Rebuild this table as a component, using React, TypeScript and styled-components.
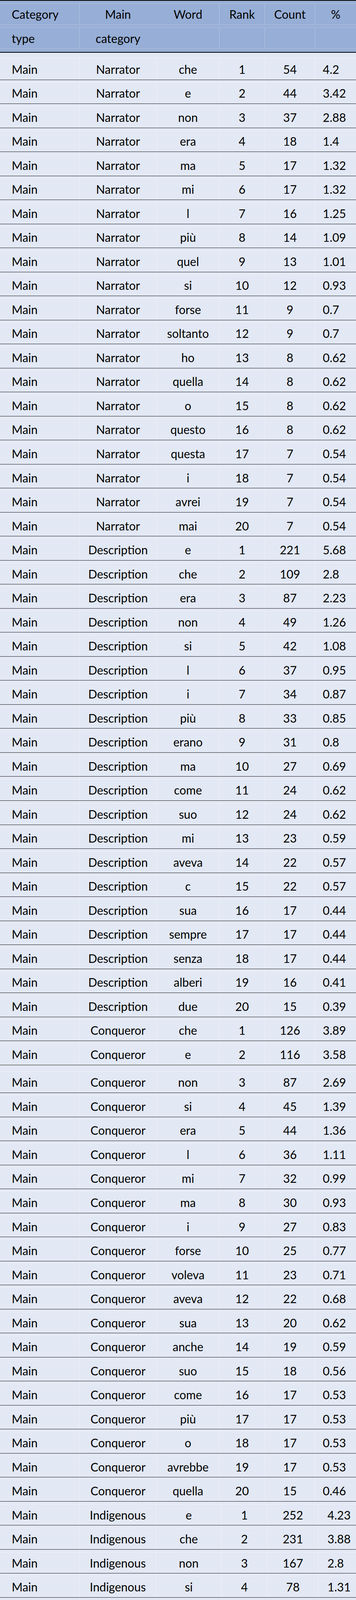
import React from 'react';
import styled, { createGlobalStyle } from 'styled-components';

const GlobalStyle = createGlobalStyle`
  html, body {
    margin: 0;
    padding: 0;
    background: #ffffff;
  }
  body {
    font-family: Lato, 'Open Sans', Arial, sans-serif;
    color: #000;
  }
`;

type Row = [word: string, rank: number, count: number, pct: string];

// column widths (px) taken from the cell rules in the screenshot
const TOP_COLS = '204px 197px 161px 116px 129px 1fr';
const LAST_COLS = '204px 196px 167px 118px 130px 1fr';
const ROW_HEIGHT = 61.53;

const sections: { category: string; cols: string; pctPad: number; rows: Row[] }[] = [
  {
    category: 'Narrator',
    cols: TOP_COLS,
    pctPad: 19,
    rows: [
      ['che', 1, 54, '4.2'], ['e', 2, 44, '3.42'], ['non', 3, 37, '2.88'], ['era', 4, 18, '1.4'],
      ['ma', 5, 17, '1.32'], ['mi', 6, 17, '1.32'], ['l', 7, 16, '1.25'], ['più', 8, 14, '1.09'],
      ['quel', 9, 13, '1.01'], ['si', 10, 12, '0.93'], ['forse', 11, 9, '0.7'], ['soltanto', 12, 9, '0.7'],
      ['ho', 13, 8, '0.62'], ['quella', 14, 8, '0.62'], ['o', 15, 8, '0.62'], ['questo', 16, 8, '0.62'],
      ['questa', 17, 7, '0.54'], ['i', 18, 7, '0.54'], ['avrei', 19, 7, '0.54'], ['mai', 20, 7, '0.54'],
    ],
  },
  {
    category: 'Description',
    cols: TOP_COLS,
    pctPad: 19,
    rows: [
      ['e', 1, 221, '5.68'], ['che', 2, 109, '2.8'], ['era', 3, 87, '2.23'], ['non', 4, 49, '1.26'],
      ['si', 5, 42, '1.08'], ['l', 6, 37, '0.95'], ['i', 7, 34, '0.87'], ['più', 8, 33, '0.85'],
      ['erano', 9, 31, '0.8'], ['ma', 10, 27, '0.69'], ['come', 11, 24, '0.62'], ['suo', 12, 24, '0.62'],
      ['mi', 13, 23, '0.59'], ['aveva', 14, 22, '0.57'], ['c', 15, 22, '0.57'], ['sua', 16, 17, '0.44'],
      ['sempre', 17, 17, '0.44'], ['senza', 18, 17, '0.44'], ['alberi', 19, 16, '0.41'], ['due', 20, 15, '0.39'],
    ],
  },
  {
    category: 'Conqueror',
    cols: TOP_COLS,
    pctPad: 19,
    rows: [
      ['che', 1, 126, '3.89'], ['e', 2, 116, '3.58'], ['non', 3, 87, '2.69'], ['si', 4, 45, '1.39'],
      ['era', 5, 44, '1.36'], ['l', 6, 36, '1.11'], ['mi', 7, 32, '0.99'], ['ma', 8, 30, '0.93'],
      ['i', 9, 27, '0.83'], ['forse', 10, 25, '0.77'], ['voleva', 11, 23, '0.71'], ['aveva', 12, 22, '0.68'],
      ['sua', 13, 20, '0.62'], ['anche', 14, 19, '0.59'], ['suo', 15, 18, '0.56'], ['come', 16, 17, '0.53'],
      ['più', 17, 17, '0.53'], ['o', 18, 17, '0.53'], ['avrebbe', 19, 17, '0.53'], ['quella', 20, 15, '0.46'],
    ],
  },
  {
    category: 'Indigenous',
    cols: LAST_COLS,
    pctPad: 23,
    rows: [
      ['e', 1, 252, '4.23'], ['che', 2, 231, '3.88'], ['non', 3, 167, '2.8'], ['si', 4, 78, '1.31'],
      ['era', 5, 77, '1.29'], ['mi', 6, 69, '1.16'], ['ma', 7, 67, '1.12'], ['l', 8, 61, '1.02'],
      ['aveva', 9, 56, '0.94'], ['forse', 10, 47, '0.79'], ['come', 11, 47, '0.79'], ['se', 12, 40, '0.67'],
      ['suo', 13, 39, '0.65'], ['perché', 14, 39, '0.65'], ['senza', 15, 38, '0.64'], ['i', 16, 38, '0.64'],
      ['più', 17, 38, '0.64'], ['johannes', 18, 38, '0.64'], ['mia', 19, 34, '0.57'], ['sua', 20, 34, '0.57'],
    ],
  },
];

const Table = styled.div`
  width: 911px;
  font-family: Lato, 'Open Sans', Arial, sans-serif;
  font-size: 30px;
  line-height: 1;
  color: #000;
`;

const Head = styled.div`
  background: #97aed6;
  border-top: 2px solid #000;
  border-bottom: 2px solid #000;
  padding: 6px 0 8px;
  display: flex;
  flex-direction: column;
  gap: 6px;
`;

const HeadRow = styled.div<{ $h: number }>`
  display: grid;
  grid-template-columns: ${TOP_COLS};
  height: ${({ $h }) => $h}px;
  box-sizing: border-box;
  border-top: 1px solid rgba(255, 255, 255, 0.28);
  border-bottom: 1px solid rgba(255, 255, 255, 0.28);
`;

const HeadCell = styled.div<{ $left?: boolean; $noRule?: boolean }>`
  display: flex;
  align-items: center;
  justify-content: ${({ $left }) => ($left ? 'flex-start' : 'center')};
  padding-left: ${({ $left }) => ($left ? '30px' : '0')};
  border-right: 1px solid
    ${({ $noRule }) => ($noRule ? 'transparent' : 'rgba(255, 255, 255, 0.28)')};
  &:last-child {
    border-right: none;
  }
`;

const Body = styled.div`
  background: #e2e8f4;
  border-bottom: 1px solid #000;
`;

const BodyRow = styled.div<{ $extra: number }>`
  height: ${({ $extra }) => ROW_HEIGHT + $extra}px;
  box-sizing: border-box;
  padding-top: ${({ $extra }) => 6 + $extra}px;
  border-bottom: 1px solid #1e1e1e;
  display: flex;
  overflow: hidden;
`;

const Cells = styled.div<{ $cols: string }>`
  flex: 1;
  display: grid;
  grid-template-columns: ${({ $cols }) => $cols};
  border-top: 1px solid rgba(255, 255, 255, 0.45);
`;

const Cell = styled.div<{ $align: 'left' | 'center' | 'pct'; $pad?: number }>`
  display: flex;
  align-items: center;
  justify-content: ${({ $align }) => ($align === 'center' ? 'center' : 'flex-start')};
  padding-left: ${({ $align, $pad }) =>
    $align === 'left' ? '30px' : $align === 'pct' ? `${$pad ?? 19}px` : '0'};
  border-right: 1px solid rgba(255, 255, 255, 0.45);
  white-space: nowrap;
  &:last-child {
    border-right: none;
  }
`;

export default function App() {
  return (
    <>
      <GlobalStyle />
      <Table>
        <Head>
          <HeadRow $h={56}>
            <HeadCell $left>Category</HeadCell>
            <HeadCell $noRule>Main</HeadCell>
            <HeadCell>Word</HeadCell>
            <HeadCell>Rank</HeadCell>
            <HeadCell>Count</HeadCell>
            <HeadCell>%</HeadCell>
          </HeadRow>
          <HeadRow $h={55}>
            <HeadCell $left>type</HeadCell>
            <HeadCell $noRule>category</HeadCell>
            <HeadCell />
            <HeadCell />
            <HeadCell />
            <HeadCell />
          </HeadRow>
        </Head>
        <Body>
          {sections.map((s, si) =>
            s.rows.map(([word, rank, count, pct], ri) => {
              let extra = 0;
              if (si === 0 && ri === 0) extra = 8;
              // small page-break gap in the Conqueror block
              if (s.category === 'Conqueror' && ri === 2) extra = 10;
              return (
                <BodyRow key={`${s.category}-${rank}`} $extra={extra}>
                  <Cells $cols={s.cols}>
                    <Cell $align="left">Main</Cell>
                    <Cell $align="center">{s.category}</Cell>
                    <Cell $align="center">{word}</Cell>
                    <Cell $align="center">{rank}</Cell>
                    <Cell $align="center">{count}</Cell>
                    <Cell $align="pct" $pad={s.pctPad}>
                      {pct}
                    </Cell>
                  </Cells>
                </BodyRow>
              );
            })
          )}
        </Body>
      </Table>
    </>
  );
}
